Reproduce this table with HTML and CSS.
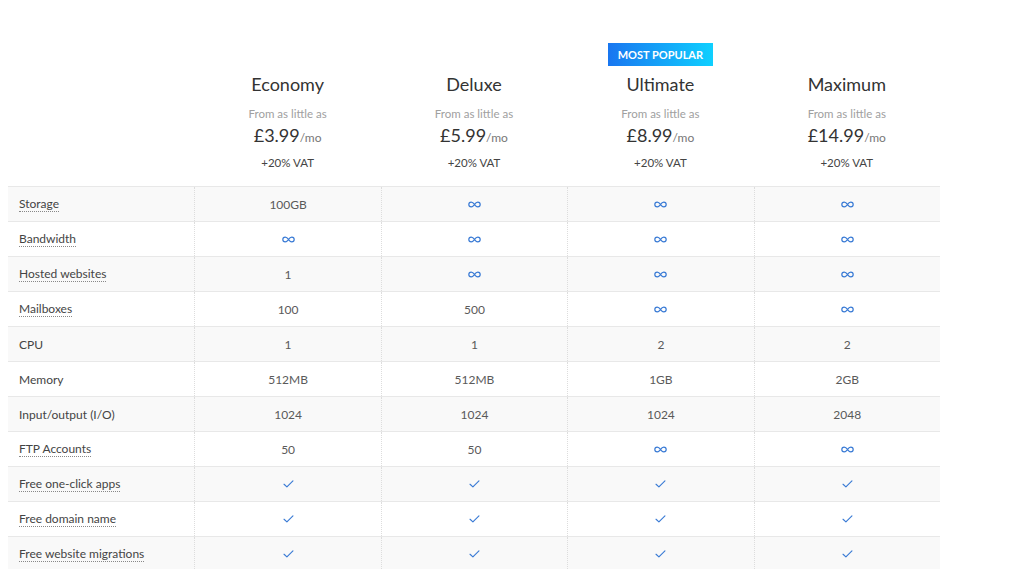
FILE: index.html
```html
<!DOCTYPE html>
<html lang="en">
<head>
<meta charset="utf-8">
<title>Hosting plans</title>
<link rel="stylesheet" href="styles.css">
</head>
<body>
<div class="pricing">
  <div class="plans">
    <div class="plan plan-empty"></div>
    <div class="plan">
      <span class="badge badge-hidden">MOST POPULAR</span>
      <h2 class="plan-name">Economy</h2>
      <div class="from">From as little as</div>
      <div class="price">£3.99<span class="per">/mo</span></div>
      <div class="vat">+20% VAT</div>
    </div>
    <div class="plan">
      <span class="badge badge-hidden">MOST POPULAR</span>
      <h2 class="plan-name">Deluxe</h2>
      <div class="from">From as little as</div>
      <div class="price">£5.99<span class="per">/mo</span></div>
      <div class="vat">+20% VAT</div>
    </div>
    <div class="plan">
      <span class="badge">MOST POPULAR</span>
      <h2 class="plan-name">Ultimate</h2>
      <div class="from">From as little as</div>
      <div class="price">£8.99<span class="per">/mo</span></div>
      <div class="vat">+20% VAT</div>
    </div>
    <div class="plan">
      <span class="badge badge-hidden">MOST POPULAR</span>
      <h2 class="plan-name">Maximum</h2>
      <div class="from">From as little as</div>
      <div class="price">£14.99<span class="per">/mo</span></div>
      <div class="vat">+20% VAT</div>
    </div>
  </div>

  <div class="table">
    <div class="row alt">
      <div class="label"><span class="tip">Storage</span></div>
      <div class="cell">100GB</div>
      <div class="cell"><svg class="inf" viewBox="0 0 16 8"><path d="M8 4C6.5 1.6 5.2 1 4 1 2.3 1 1 2.3 1 4s1.3 3 3 3c1.2 0 2.5-.6 4-3 1.5-2.4 2.8-3 4-3 1.7 0 3 1.3 3 3s-1.3 3-3 3c-1.2 0-2.5-.6-4-3z"/></svg></div>
      <div class="cell"><svg class="inf" viewBox="0 0 16 8"><path d="M8 4C6.5 1.6 5.2 1 4 1 2.3 1 1 2.3 1 4s1.3 3 3 3c1.2 0 2.5-.6 4-3 1.5-2.4 2.8-3 4-3 1.7 0 3 1.3 3 3s-1.3 3-3 3c-1.2 0-2.5-.6-4-3z"/></svg></div>
      <div class="cell"><svg class="inf" viewBox="0 0 16 8"><path d="M8 4C6.5 1.6 5.2 1 4 1 2.3 1 1 2.3 1 4s1.3 3 3 3c1.2 0 2.5-.6 4-3 1.5-2.4 2.8-3 4-3 1.7 0 3 1.3 3 3s-1.3 3-3 3c-1.2 0-2.5-.6-4-3z"/></svg></div>
    </div>
    <div class="row">
      <div class="label"><span class="tip">Bandwidth</span></div>
      <div class="cell"><svg class="inf" viewBox="0 0 16 8"><path d="M8 4C6.5 1.6 5.2 1 4 1 2.3 1 1 2.3 1 4s1.3 3 3 3c1.2 0 2.5-.6 4-3 1.5-2.4 2.8-3 4-3 1.7 0 3 1.3 3 3s-1.3 3-3 3c-1.2 0-2.5-.6-4-3z"/></svg></div>
      <div class="cell"><svg class="inf" viewBox="0 0 16 8"><path d="M8 4C6.5 1.6 5.2 1 4 1 2.3 1 1 2.3 1 4s1.3 3 3 3c1.2 0 2.5-.6 4-3 1.5-2.4 2.8-3 4-3 1.7 0 3 1.3 3 3s-1.3 3-3 3c-1.2 0-2.5-.6-4-3z"/></svg></div>
      <div class="cell"><svg class="inf" viewBox="0 0 16 8"><path d="M8 4C6.5 1.6 5.2 1 4 1 2.3 1 1 2.3 1 4s1.3 3 3 3c1.2 0 2.5-.6 4-3 1.5-2.4 2.8-3 4-3 1.7 0 3 1.3 3 3s-1.3 3-3 3c-1.2 0-2.5-.6-4-3z"/></svg></div>
      <div class="cell"><svg class="inf" viewBox="0 0 16 8"><path d="M8 4C6.5 1.6 5.2 1 4 1 2.3 1 1 2.3 1 4s1.3 3 3 3c1.2 0 2.5-.6 4-3 1.5-2.4 2.8-3 4-3 1.7 0 3 1.3 3 3s-1.3 3-3 3c-1.2 0-2.5-.6-4-3z"/></svg></div>
    </div>
    <div class="row alt">
      <div class="label"><span class="tip">Hosted websites</span></div>
      <div class="cell">1</div>
      <div class="cell"><svg class="inf" viewBox="0 0 16 8"><path d="M8 4C6.5 1.6 5.2 1 4 1 2.3 1 1 2.3 1 4s1.3 3 3 3c1.2 0 2.5-.6 4-3 1.5-2.4 2.8-3 4-3 1.7 0 3 1.3 3 3s-1.3 3-3 3c-1.2 0-2.5-.6-4-3z"/></svg></div>
      <div class="cell"><svg class="inf" viewBox="0 0 16 8"><path d="M8 4C6.5 1.6 5.2 1 4 1 2.3 1 1 2.3 1 4s1.3 3 3 3c1.2 0 2.5-.6 4-3 1.5-2.4 2.8-3 4-3 1.7 0 3 1.3 3 3s-1.3 3-3 3c-1.2 0-2.5-.6-4-3z"/></svg></div>
      <div class="cell"><svg class="inf" viewBox="0 0 16 8"><path d="M8 4C6.5 1.6 5.2 1 4 1 2.3 1 1 2.3 1 4s1.3 3 3 3c1.2 0 2.5-.6 4-3 1.5-2.4 2.8-3 4-3 1.7 0 3 1.3 3 3s-1.3 3-3 3c-1.2 0-2.5-.6-4-3z"/></svg></div>
    </div>
    <div class="row">
      <div class="label"><span class="tip">Mailboxes</span></div>
      <div class="cell">100</div>
      <div class="cell">500</div>
      <div class="cell"><svg class="inf" viewBox="0 0 16 8"><path d="M8 4C6.5 1.6 5.2 1 4 1 2.3 1 1 2.3 1 4s1.3 3 3 3c1.2 0 2.5-.6 4-3 1.5-2.4 2.8-3 4-3 1.7 0 3 1.3 3 3s-1.3 3-3 3c-1.2 0-2.5-.6-4-3z"/></svg></div>
      <div class="cell"><svg class="inf" viewBox="0 0 16 8"><path d="M8 4C6.5 1.6 5.2 1 4 1 2.3 1 1 2.3 1 4s1.3 3 3 3c1.2 0 2.5-.6 4-3 1.5-2.4 2.8-3 4-3 1.7 0 3 1.3 3 3s-1.3 3-3 3c-1.2 0-2.5-.6-4-3z"/></svg></div>
    </div>
    <div class="row alt">
      <div class="label">CPU</div>
      <div class="cell">1</div>
      <div class="cell">1</div>
      <div class="cell">2</div>
      <div class="cell">2</div>
    </div>
    <div class="row">
      <div class="label">Memory</div>
      <div class="cell">512MB</div>
      <div class="cell">512MB</div>
      <div class="cell">1GB</div>
      <div class="cell">2GB</div>
    </div>
    <div class="row alt">
      <div class="label">Input/output (I/O)</div>
      <div class="cell">1024</div>
      <div class="cell">1024</div>
      <div class="cell">1024</div>
      <div class="cell">2048</div>
    </div>
    <div class="row">
      <div class="label"><span class="tip">FTP Accounts</span></div>
      <div class="cell">50</div>
      <div class="cell">50</div>
      <div class="cell"><svg class="inf" viewBox="0 0 16 8"><path d="M8 4C6.5 1.6 5.2 1 4 1 2.3 1 1 2.3 1 4s1.3 3 3 3c1.2 0 2.5-.6 4-3 1.5-2.4 2.8-3 4-3 1.7 0 3 1.3 3 3s-1.3 3-3 3c-1.2 0-2.5-.6-4-3z"/></svg></div>
      <div class="cell"><svg class="inf" viewBox="0 0 16 8"><path d="M8 4C6.5 1.6 5.2 1 4 1 2.3 1 1 2.3 1 4s1.3 3 3 3c1.2 0 2.5-.6 4-3 1.5-2.4 2.8-3 4-3 1.7 0 3 1.3 3 3s-1.3 3-3 3c-1.2 0-2.5-.6-4-3z"/></svg></div>
    </div>
    <div class="row alt">
      <div class="label"><span class="tip">Free one-click apps</span></div>
      <div class="cell"><svg class="chk" viewBox="0 0 12 9"><path d="M1 4.8l3.2 3L11 1"/></svg></div>
      <div class="cell"><svg class="chk" viewBox="0 0 12 9"><path d="M1 4.8l3.2 3L11 1"/></svg></div>
      <div class="cell"><svg class="chk" viewBox="0 0 12 9"><path d="M1 4.8l3.2 3L11 1"/></svg></div>
      <div class="cell"><svg class="chk" viewBox="0 0 12 9"><path d="M1 4.8l3.2 3L11 1"/></svg></div>
    </div>
    <div class="row">
      <div class="label"><span class="tip">Free domain name</span></div>
      <div class="cell"><svg class="chk" viewBox="0 0 12 9"><path d="M1 4.8l3.2 3L11 1"/></svg></div>
      <div class="cell"><svg class="chk" viewBox="0 0 12 9"><path d="M1 4.8l3.2 3L11 1"/></svg></div>
      <div class="cell"><svg class="chk" viewBox="0 0 12 9"><path d="M1 4.8l3.2 3L11 1"/></svg></div>
      <div class="cell"><svg class="chk" viewBox="0 0 12 9"><path d="M1 4.8l3.2 3L11 1"/></svg></div>
    </div>
    <div class="row alt">
      <div class="label"><span class="tip">Free website migrations</span></div>
      <div class="cell"><svg class="chk" viewBox="0 0 12 9"><path d="M1 4.8l3.2 3L11 1"/></svg></div>
      <div class="cell"><svg class="chk" viewBox="0 0 12 9"><path d="M1 4.8l3.2 3L11 1"/></svg></div>
      <div class="cell"><svg class="chk" viewBox="0 0 12 9"><path d="M1 4.8l3.2 3L11 1"/></svg></div>
      <div class="cell"><svg class="chk" viewBox="0 0 12 9"><path d="M1 4.8l3.2 3L11 1"/></svg></div>
    </div>
  </div>
</div>
</body>
</html>
```

FILE: styles.css
```css
* { box-sizing: border-box; }
html, body {
  margin: 0;
  padding: 0;
  background: #fff;
  overflow: hidden;
}
body {
  font-family: "Lato", "Open Sans", sans-serif;
  color: #444;
}
.pricing {
  width: 932px;
  margin-left: 8px;
}
.plans {
  display: grid;
  grid-template-columns: repeat(5, 1fr);
  padding-top: 43px;
}
.plan {
  display: flex;
  flex-direction: column;
  align-items: center;
  padding-bottom: 15px;
}
.badge {
  display: block;
  height: 23px;
  line-height: 23px;
  padding: 0 10px;
  font-size: 11px;
  font-weight: 700;
  color: #fff;
  background: linear-gradient(90deg, #1976f0 0%, #0fd0ff 100%);
}
.badge-hidden { visibility: hidden; }
.plan-name {
  margin: 6px 0 0;
  font-size: 18px;
  font-weight: 400;
  line-height: 24px;
  color: #333;
}
.from {
  margin-top: 10px;
  font-size: 11.5px;
  line-height: 16px;
  color: #a0a0a0;
}
.price {
  margin-top: 1px;
  font-size: 18px;
  line-height: 24px;
  color: #333;
}
.per {
  font-size: 12px;
  color: #777;
}
.vat {
  margin-top: 5px;
  font-size: 11.5px;
  line-height: 16px;
  color: #444;
}
.table {
  border-top: 1px solid #e8e8e8;
}
.row {
  display: grid;
  grid-template-columns: repeat(5, 1fr);
  height: 35px;
  border-bottom: 1px solid #e8e8e8;
  font-size: 12px;
}
.row.alt { background: #f9f9f9; }
.label, .cell {
  display: flex;
  align-items: center;
  height: 100%;
}
.label {
  padding-left: 11px;
  color: #444;
}
.cell {
  justify-content: center;
  color: #5a5a5a;
  border-left: 1px dotted #ddd;
}
.tip {
  border-bottom: 1px dotted #888;
  line-height: 14px;
}
.inf {
  width: 13px;
  height: 7px;
  fill: none;
  stroke: #3a7bd5;
  stroke-width: 1.5;
}
.chk {
  width: 11px;
  height: 8px;
  fill: none;
  stroke: #3a7bd5;
  stroke-width: 1.3;
  stroke-linecap: round;
  stroke-linejoin: round;
}
```
